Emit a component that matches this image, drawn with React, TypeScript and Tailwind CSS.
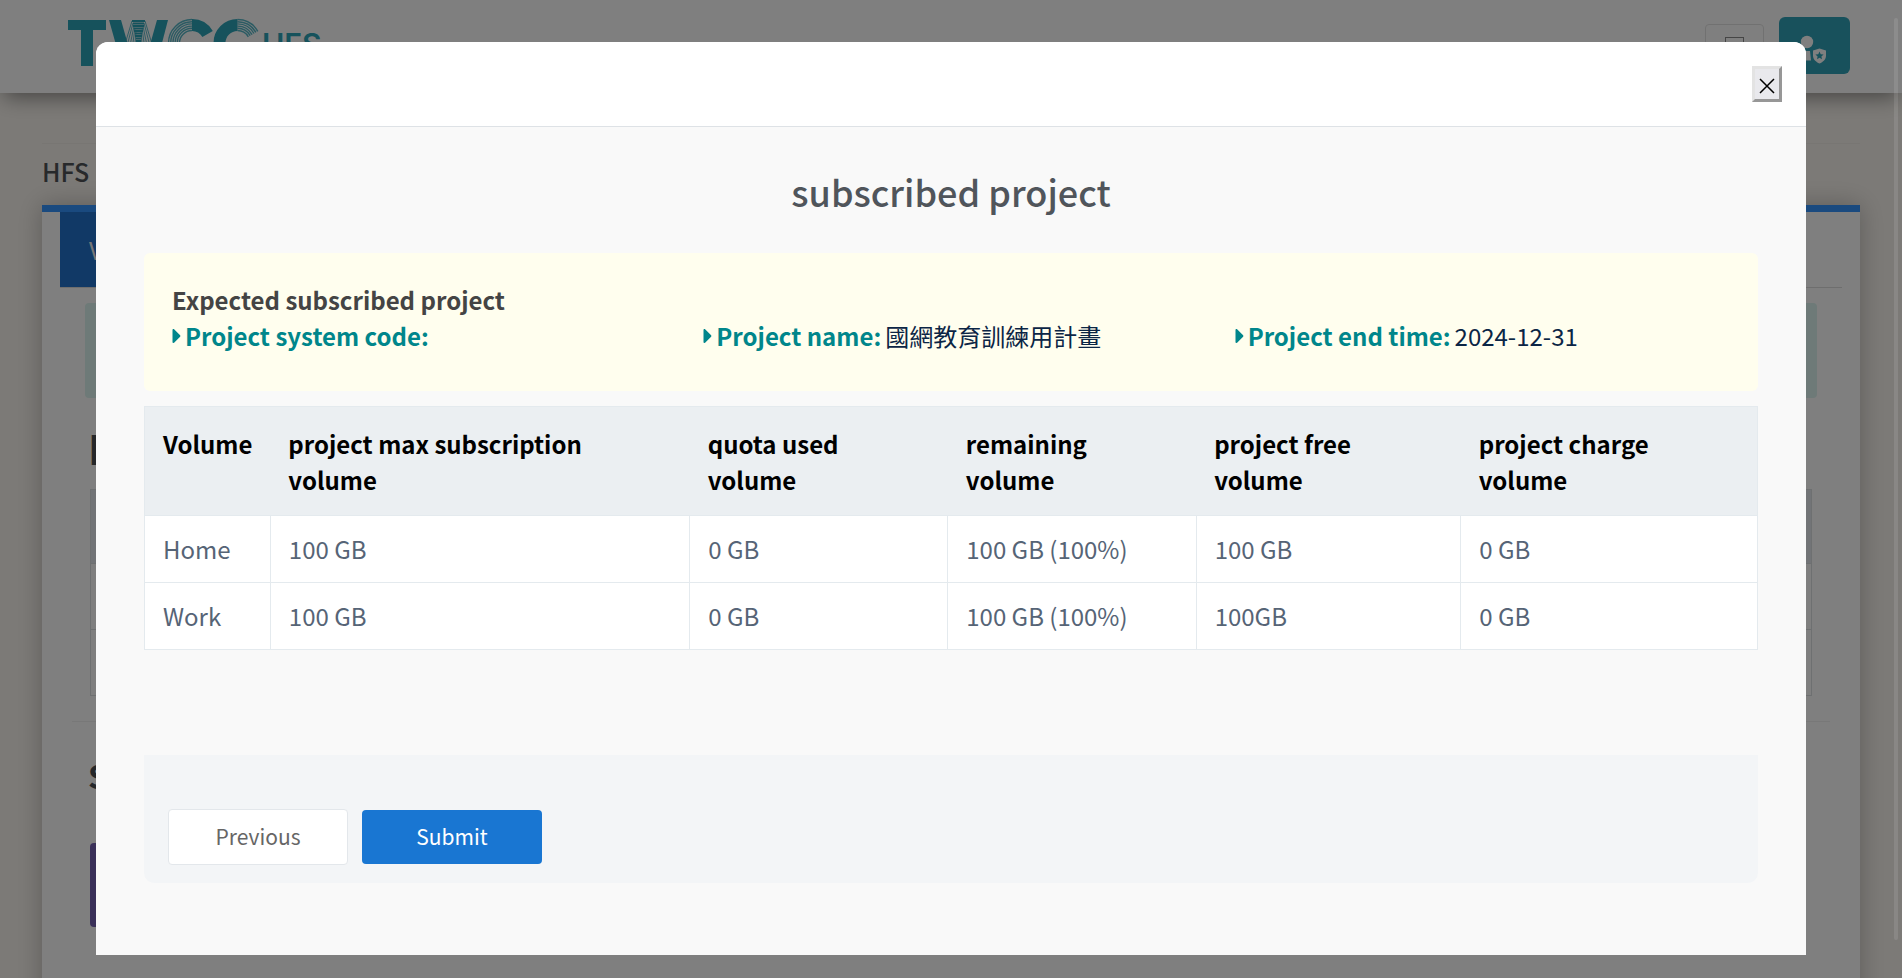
import React from "react";
import { FaCaretRight } from "react-icons/fa";

const headers = [
  ["Volume", ""],
  ["project max subscription", "volume"],
  ["quota used", "volume"],
  ["remaining", "volume"],
  ["project free", "volume"],
  ["project charge", "volume"],
];

const rows = [
  ["Home", "100 GB", "0 GB", "100 GB (100%)", "100 GB", "0 GB"],
  ["Work", "100 GB", "0 GB", "100 GB (100%)", "100GB", "0 GB"],
];

const facts = [
  { label: "Project system code:", value: "" },
  { label: "Project name:", value: "國網教育訓練用計畫" },
  { label: "Project end time:", value: "2024-12-31" },
];

function Logo() {
  return (
    <svg width="260" height="50" viewBox="0 0 260 50" role="img" aria-label="TWCC HFS">
      <g fill="#2ca4b8">
        <rect x="0" y="2" width="38" height="10" />
        <rect x="13" y="2" width="12" height="46" />
        <polygon points="41,2 53,2 66,48 54,48" />
        <polygon points="89,2 100,2 88,48 76,48" />
      </g>
      <g stroke="#2ca4b8" fill="none" strokeWidth="1">
        <path
          d="M64 3L57 26M65 5L59 28M66 8L61.500 30M67 10L64 32M68 13L66.500 34M77 3L84 26M76 5L82 28M75 8L79.500 30M74 10L77 32M73 13L74.500 34"
          opacity="0.75"
        />
        <path d="M64 3H77M65 5.500H76M65 8H76M66 10.500H75M66 13H75M67 15.500H74M67 18H74M68 20.500H73M68 23H73" strokeWidth="1.800" />
        <path
          d="M124 1.500A23.500 23.500 0 0 0 124 48.500M124 3.700A21.300 21.300 0 0 0 124 46.300M124 5.900A19.100 19.100 0 0 0 124 44.100M124 8.100A16.900 16.900 0 0 0 124 41.900M124 10.300A14.700 14.700 0 0 0 124 39.700M124 12.500A12.500 12.500 0 0 0 124 37.500"
          strokeWidth="1.400"
          opacity="0.8"
        />
        <path d="M124 7A18 18 0 0 1 139.600 16" strokeWidth="12" />
        <path d="M169.500 7A18 18 0 0 0 169.500 43" strokeWidth="12" />
        <path
          d="M169.500 1.500A23.500 23.500 0 0 1 189.800 13.300M169.500 3.700A21.300 21.300 0 0 1 187.900 14.400M169.500 5.900A19.100 19.100 0 0 1 186 15.500M169.500 8.100A16.900 16.900 0 0 1 184.100 16.600M169.500 10.300A14.700 14.700 0 0 1 182.200 17.700M169.500 12.500A12.500 12.500 0 0 1 180.300 18.800"
          strokeWidth="1.400"
          opacity="0.8"
        />
      </g>
      <text x="194" y="37" fill="#2ca4b8" fontFamily="Inter, sans-serif" fontWeight="600" fontSize="30">
        HFS
      </text>
    </svg>
  );
}

function UserShieldIcon() {
  return (
    <svg width="32" height="30" viewBox="0 0 32 30" aria-hidden="true">
      <g fill="#ffffff">
        <circle cx="8" cy="7" r="6.200" />
        <path d="M0 25.500v-3C0 18 2 16 6 16h5l1 9.500z" />
        <path d="M20.500 13.500l6.500 2v5c0 4-3 6.500-6.500 8-3.500-1.500-6.500-4-6.500-8v-5z" />
      </g>
      <path
        d="M20.500 16.500l1.200 2.700 2.900.3-2.200 1.900.6 2.900-2.500-1.500-2.500 1.500.6-2.900-2.200-1.900 2.900-.3z"
        fill="#2ca4b8"
      />
    </svg>
  );
}

function BackgroundPage() {
  return (
    <div className="h-full bg-[#f9f5ef]" aria-hidden="true">
      <header className="relative flex h-[93px] items-start justify-between bg-white pr-[52px] pl-[68px] shadow-[0_8px_20px_-4px_rgba(0,0,0,0.45)]">
        <div className="pt-[18px]">
          <Logo />
        </div>
        <div className="flex items-start gap-[15px] pt-[17px]">
          <div className="mt-[7px] flex h-[42px] w-[59px] justify-center rounded border border-[#e2e2e2] pt-3">
            <div className="h-4 w-[19px] border border-[#8a8a8a]" />
          </div>
          <div className="flex h-[57px] w-[71px] items-start justify-center rounded-md bg-[#30a2b8] pt-[18px]">
            <UserShieldIcon />
          </div>
        </div>
      </header>
      <main className="px-[42px] pt-[50px]">
        <div className="border-t border-[#f1ede7] pt-[9px]">
          <h1 className="h-[52px] text-[25px] leading-9 font-medium text-[#4f5357]">HFS Usage</h1>
        </div>
        <section className="h-[900px] border-t-[7px] border-[#3494ff] bg-white px-[18px] shadow-[0_0_24px_rgba(0,0,0,0.25)]">
          <div className="border-b border-[#dcdcdc]">
            <div className="flex h-[75px] w-60 items-center bg-[#2272cc] px-[29px] text-2xl text-[#eee]">
              Volume
            </div>
          </div>
          <div className="mx-[25px] mt-[15px] h-[95px] rounded bg-[#dcf4f0]" />
          <h2 className="mt-6 px-7 text-[41px] leading-[50px] font-bold text-[#4b4f54]">ID</h2>
          <div className="mx-[30px] mt-[17px] h-[207px] border border-[#dde0e3]">
            <div className="h-[74px] border-b border-[#dde0e3] bg-[#e4e9ee]" />
            <div className="h-[66px] border-b border-[#dde0e3]" />
          </div>
          <div className="mx-3 mt-[25px] border-t border-[#f0f0f0]" />
          <h2 className="mt-7 px-7 text-[32px] leading-[50px] font-bold text-[#4b4f54]">Storage</h2>
          <div className="mx-[30px] mt-[43px] h-[84px] w-60 rounded bg-[#7560b2]" />
        </section>
      </main>
    </div>
  );
}

function ProjectDialog() {
  return (
    <div
      role="dialog"
      aria-modal="true"
      aria-labelledby="dialog-title"
      className="mx-24 mt-[42px] overflow-hidden rounded-t-[12px] bg-[#f9f9f9]"
    >
      <div className="flex justify-end border-b border-[#dee2e6] bg-white px-6 py-6">
        <button
          type="button"
          aria-label="Close"
          className="flex h-9 w-[30px] items-center justify-center border-[3px] border-t-[#e3e3e3] border-r-[#979797] border-b-[#979797] border-l-[#e3e3e3] bg-[#e9e9ed]"
        >
          <svg width="16" height="16" viewBox="0 0 16 16" className="mt-1 shrink-0" aria-hidden="true">
            <path d="M1 1L15 15M15 1L1 15" stroke="#000" strokeWidth="1.500" />
          </svg>
        </button>
      </div>
      <div className="px-12 pt-10 pb-[72px]">
        <h2 id="dialog-title" className="text-center text-[36px] leading-[48px] font-medium text-[#50555b]">
          subscribed project
        </h2>
        <section className="mt-[38px] rounded-md bg-[#fffeee] px-[10px] pt-[29px] pb-[37px] text-2xl leading-9">
          <h3 className="px-[18px] font-bold text-[#444]">Expected subscribed project</h3>
          <dl className="grid grid-cols-3">
            {facts.map((fact) => (
              <div key={fact.label} className="flex items-center px-[18px]">
                <FaCaretRight aria-hidden="true" className="-ml-[3px] h-6 w-4 text-[#00868b]" />
                <dt className="font-bold whitespace-nowrap text-[#00868b]">{fact.label}</dt>
                <dd className="ml-1 whitespace-nowrap text-[#0b2545]">{fact.value}</dd>
              </div>
            ))}
          </dl>
        </section>
        <table className="mt-[15px] w-full table-fixed border-collapse bg-white text-left text-2xl leading-9">
          <colgroup>
            <col className="w-[7.8%]" />
            <col className="w-[26%]" />
            <col className="w-[16%]" />
            <col className="w-[15.4%]" />
            <col className="w-[16.4%]" />
            <col />
          </colgroup>
          <thead>
            <tr className="border border-[#e4eaee] bg-[#ebeff2]">
              {headers.map(([first, second]) => (
                <th key={first} scope="col" className="px-[18px] pt-[19px] pb-[17px] align-top font-bold whitespace-nowrap text-black">
                  {first}
                  {second && <br />}
                  {second}
                </th>
              ))}
            </tr>
          </thead>
          <tbody>
            {rows.map((row) => (
              <tr key={row[0]}>
                {row.map((cell, i) => (
                  <td key={i} className="border border-[#e4eaee] px-[18px] py-[15px] text-[#566476]">
                    {cell}
                  </td>
                ))}
              </tr>
            ))}
          </tbody>
        </table>
        <div className="mt-[105px] flex items-center gap-[14px] rounded-b-[10px] bg-[#f3f5f7] px-6 pt-[54px] pb-[18px] text-[21px]">
          <button
            type="button"
            className="h-14 w-[180px] rounded border border-[#e3e7eb] bg-white text-[#666]"
          >
            Previous
          </button>
          <button type="button" className="h-[54px] w-[180px] rounded bg-[#1976d2] text-white">
            Submit
          </button>
        </div>
      </div>
    </div>
  );
}

export default function App() {
  return (
    <div className="relative h-screen overflow-hidden font-['Noto_Sans_CJK_TC','Noto_Sans',sans-serif]">
      <BackgroundPage />
      <div className="absolute inset-0 bg-black/50">
        <div className="absolute top-[18px] right-1 h-[922px] w-1 rounded-full bg-white/10" />
        <ProjectDialog />
      </div>
    </div>
  );
}
